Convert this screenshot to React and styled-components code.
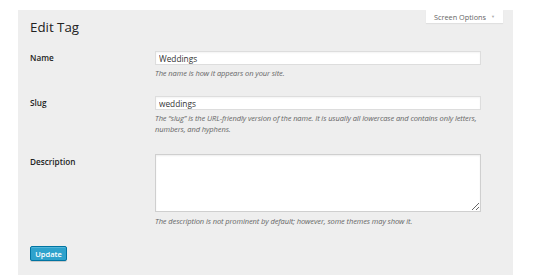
import React from "react";
import styled, { createGlobalStyle } from "styled-components";

const GlobalStyle = createGlobalStyle`
  html, body {
    margin: 0;
    padding: 0;
    background: #ffffff;
    font-family: "Open Sans", "Liberation Sans", sans-serif;
  }
`;

const Page = styled.div`
  width: 533px;
  height: 275px;
  padding: 10px 20px 0 18px;
  box-sizing: border-box;
  overflow: hidden;
`;

const Panel = styled.div`
  position: relative;
  height: 100%;
  background: #eeeeee;
  padding: 0 32px 0 12px;
  box-sizing: border-box;
`;

const ScreenOptions = styled.div`
  position: absolute;
  top: 0;
  right: 10px;
  width: 77px;
  height: 13px;
  background: #ffffff;
  box-shadow: 0 1px 1px rgba(0, 0, 0, 0.06);
  display: flex;
  align-items: center;
  justify-content: center;
  gap: 5px;
  font-size: 7.3px;
  color: #666;
`;

const Caret = styled.span`
  font-size: 4px;
  color: #aaa;
`;

const Title = styled.h1`
  margin: 0;
  padding-top: 8px;
  height: 33px;
  box-sizing: border-box;
  font-size: 13.3px;
  font-weight: 400;
  color: #222;
  line-height: 18px;
`;

const Row = styled.div`
  display: grid;
  grid-template-columns: 125px 326px;
  margin-top: ${(p) => p.$top}px;
`;

const Label = styled.label`
  font-size: 8.2px;
  font-weight: 600;
  color: #222;
  line-height: 14px;
  padding-top: ${(p) => p.$pad || 0}px;
`;

const Field = styled.div`
  display: flex;
  flex-direction: column;
`;

const Input = styled.input`
  height: 14px;
  box-sizing: border-box;
  border: 1px solid #dddddd;
  box-shadow: inset 0 1px 2px rgba(0, 0, 0, 0.05);
  background: #fff;
  padding: 0 3px;
  font-family: "Open Sans", "Liberation Sans", sans-serif;
  font-size: 8.3px;
  color: #333;
  outline: none;
`;

const TextArea = styled.textarea`
  height: 58px;
  box-sizing: border-box;
  border: 1px solid #cfcfcf;
  box-shadow: inset 0 1px 2px rgba(0, 0, 0, 0.07);
  background: #fff;
  padding: 2px 3px;
  margin: 0;
  resize: vertical;
  font-family: "Open Sans", "Liberation Sans", sans-serif;
  font-size: 8px;
`;

const Help = styled.p`
  margin: ${(p) => p.$top || 3}px 0 0;
  font-size: 7.5px;
  font-style: italic;
  color: #666;
  line-height: 11px;
  letter-spacing: -0.1px;
`;

const Button = styled.button`
  margin-top: ${(p) => p.$top}px;
  width: 37px;
  height: 15px;
  padding: 0;
  border: 1px solid #0074a2;
  border-radius: 2px;
  background: #2ea2cc;
  box-shadow: inset 0 1px 0 rgba(120, 200, 230, 0.5), 0 1px 0 rgba(0, 0, 0, 0.15);
  color: #fff;
  font-family: "Open Sans", "Liberation Sans", sans-serif;
  font-size: 7.5px;
  font-weight: 600;
`;

export default function App() {
  return (
    <>
      <GlobalStyle />
      <Page>
        <Panel>
          <ScreenOptions>
            Screen Options <Caret>▼</Caret>
          </ScreenOptions>
          <Title>Edit Tag</Title>
          <Row $top={8}>
            <Label>Name</Label>
            <Field>
              <Input defaultValue="Weddings" />
              <Help>The name is how it appears on your site.</Help>
            </Field>
          </Row>
          <Row $top={17}>
            <Label>Slug</Label>
            <Field>
              <Input defaultValue="weddings" />
              <Help>
                The “slug” is the URL-friendly version of the name. It is usually
                all lowercase and contains only letters, numbers, and hyphens.
              </Help>
            </Field>
          </Row>
          <Row $top={19}>
            <Label $pad={1}>Description</Label>
            <Field>
              <TextArea />
              <Help $top={4}>
                The description is not prominent by default; however, some themes
                may show it.
              </Help>
            </Field>
          </Row>
          <Button $top={19}>Update</Button>
        </Panel>
      </Page>
    </>
  );
}
